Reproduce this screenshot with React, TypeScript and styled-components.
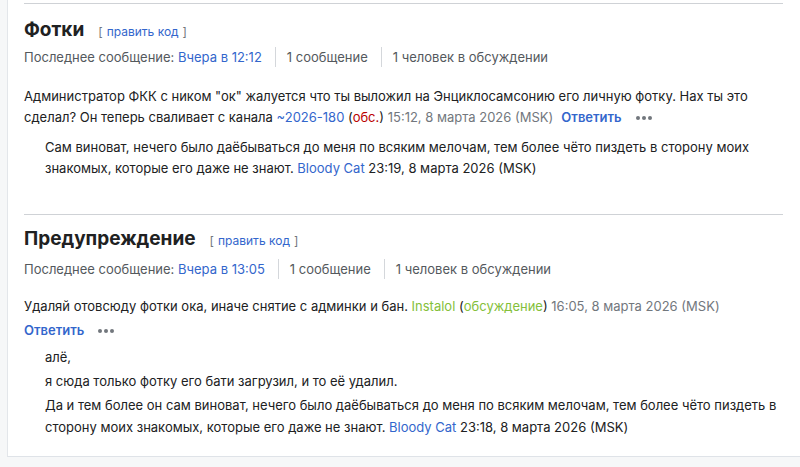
import React from "react";
import styled, { createGlobalStyle } from "styled-components";

const Global = createGlobalStyle`
  html, body { margin: 0; padding: 0; background: #f6f7f8; }
  body { font-family: Inter, "Noto Sans", sans-serif; color: #202122; }
`;

const Page = styled.div`
  padding-left: 7px;
  padding-bottom: 10px;
`;

const Panel = styled.main`
  background: #fff;
  border-left: 1px solid #e3e6ea;
  border-bottom: 1px solid #dfe3e8;
  padding: 3px 17px 18px 16px;
`;

const Section = styled.section`
  border-top: 1px solid #cfd2d6;
  & + & { margin-top: 35px; }
`;

const HeadRow = styled.div<{ $pad: number }>`
  display: flex;
  align-items: baseline;
  gap: 14px;
  padding-top: ${(p) => p.$pad}px;
`;

const Title = styled.h2`
  margin: 0;
  font-size: 19px;
  font-weight: 700;
  line-height: 28px;
`;

const EditLink = styled.span`
  font-size: 12px;
  color: #72777d;
  & a { color: #3366cc; text-decoration: none; margin: 0 4px; }
`;

const Meta = styled.div<{ $mt: number }>`
  display: flex;
  align-items: center;
  font-size: 13px;
  color: #54595d;
  height: 24px;
  margin-top: ${(p) => p.$mt}px;
`;

const Sep = styled.span`
  width: 1px;
  height: 20px;
  background: #d4d7db;
  margin: 0 11px 0 13px;
`;

const Link = styled.a<{ $tone?: "blue" | "red" | "green" }>`
  color: ${(p) =>
    p.$tone === "red" ? "#ba0000" : p.$tone === "green" ? "#84c03a" : "#3366cc"};
  text-decoration: none;
`;

const Para = styled.p<{ $indent?: boolean; $lh?: number }>`
  margin: 0;
  font-size: 13px;
  line-height: ${(p) => p.$lh ?? 21}px;
  padding-left: ${(p) => (p.$indent ? "21px" : "0")};
`;

const Actions = styled.div`
  font-size: 13px;
  line-height: 21px;
  margin-top: 3px;
`;

const Comments = styled.div<{ $top: number; $gap: number }>`
  margin-top: ${(p) => p.$top}px;
  display: flex;
  flex-direction: column;
  gap: ${(p) => p.$gap}px;
`;

const Stamp = styled.span`
  color: #72777d;
`;

const Reply = styled.a<{ $first?: boolean }>`
  color: #3366cc;
  font-weight: 600;
  text-decoration: none;
  margin-left: ${(p) => (p.$first ? "0" : "8px")};
`;

const Dots = styled.span`
  display: inline-flex;
  gap: 2px;
  margin-left: 14px;
  vertical-align: middle;
  & i {
    width: 4px;
    height: 4px;
    border-radius: 50%;
    background: #72777d;
  }
`;

const ThreeDots = () => (
  <Dots>
    <i />
    <i />
    <i />
  </Dots>
);

const Lines = styled.div`
  display: flex;
  flex-direction: column;
  gap: 2px;
`;

const MetaRow = ({ time, mt }: { time: string; mt: number }) => (
  <Meta $mt={mt}>
    <span>
      Последнее сообщение: <Link>{time}</Link>
    </span>
    <Sep />
    <span>1 сообщение</span>
    <Sep />
    <span>1 человек в обсуждении</span>
  </Meta>
);

export default function App() {
  return (
    <Page>
      <Global />
      <Panel>
        <Section>
          <HeadRow $pad={12}>
            <Title>Фотки</Title>
            <EditLink>
              [<a>править код</a>]
            </EditLink>
          </HeadRow>
          <MetaRow time="Вчера в 12:12" mt={1} />
          <Comments $top={17} $gap={9}>
            <Para>
              Администратор ФКК с ником "ок" жалуется что ты выложил на Энциклосамсонию его личную
              фотку. Нах ты это сделал? Он теперь сваливает с канала <Link>~2026-180</Link> (
              <Link $tone="red">обс.</Link>) <Stamp>15:12, 8 марта 2026 (MSK)</Stamp>
              <Reply>Ответить</Reply>
              <ThreeDots />
            </Para>
            <Para $indent>
              Сам виноват, нечего было даёбываться до меня по всяким мелочам, тем более чёто пиздеть в
              сторону моих знакомых, которые его даже не знают. <Link>Bloody Cat</Link> 23:19, 8 марта
              2026 (MSK)
            </Para>
          </Comments>
        </Section>
        <Section>
          <HeadRow $pad={10}>
            <Title>Предупреждение</Title>
            <EditLink>
              [<a>править код</a>]
            </EditLink>
          </HeadRow>
          <MetaRow time="Вчера в 13:05" mt={4} />
          <Comments $top={15} $gap={5}>
            <div>
              <Para>
                Удаляй отовсюду фотки ока, иначе снятие с админки и бан.{" "}
                <Link $tone="green">Instalol</Link> (<Link $tone="green">обсуждение</Link>){" "}
                <Stamp>16:05, 8 марта 2026 (MSK)</Stamp>
              </Para>
              <Actions>
                <Reply $first>Ответить</Reply>
                <ThreeDots />
              </Actions>
            </div>
            <Lines>
              <Para $indent $lh={22}>алё,</Para>
              <Para $indent $lh={22}>я сюда только фотку его бати загрузил, и то её удалил.</Para>
              <Para $indent $lh={22}>
                Да и тем более он сам виноват, нечего было даёбываться до меня по всяким мелочам, тем
                более чёто пиздеть в сторону моих знакомых, которые его даже не знают.{" "}
                <Link>Bloody Cat</Link> 23:18, 8 марта 2026 (MSK)
              </Para>
            </Lines>
          </Comments>
        </Section>
      </Panel>
    </Page>
  );
}
